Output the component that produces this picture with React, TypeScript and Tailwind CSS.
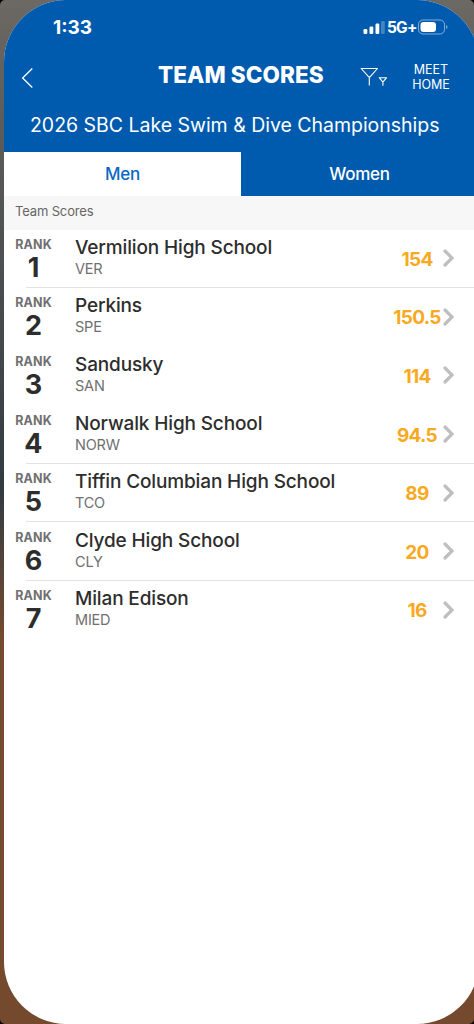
import { useState } from 'react'
import clsx from 'clsx'

type Team = {
  name: string
  code: string
  score: string
  divider?: boolean
}

const teams: Team[] = [
  { name: 'Vermilion High School', code: 'VER', score: '154', divider: true },
  { name: 'Perkins', code: 'SPE', score: '150.5' },
  { name: 'Sandusky', code: 'SAN', score: '114' },
  { name: 'Norwalk High School', code: 'NORW', score: '94.5', divider: true },
  {
    name: 'Tiffin Columbian High School',
    code: 'TCO',
    score: '89',
    divider: true
  },
  { name: 'Clyde High School', code: 'CLY', score: '20', divider: true },
  { name: 'Milan Edison', code: 'MIED', score: '16' }
]

const StatusBar = () => (
  <div className="flex h-[54px] items-center justify-between pl-[49px] pr-[30px]">
    <span className="pt-px text-[19px] font-bold leading-none">1:33</span>
    <div className="flex items-center">
      <svg width="23" height="14" viewBox="0 0 23 14" fill="currentColor">
        <rect x="0.5" y="9" width="3.8" height="5" rx="1.2" />
        <rect x="6.5" y="6.5" width="3.8" height="7.5" rx="1.2" />
        <rect x="12.5" y="3.5" width="3.8" height="10.5" rx="1.2" />
        <rect x="18" y="1" width="3.8" height="13" rx="1.2" opacity="0.25" />
      </svg>
      <span className="ml-px w-[30px] whitespace-nowrap pt-px text-[15.5px] font-bold leading-none tracking-[-0.8px]">
        5G+
      </span>
      <svg width="32" height="16" viewBox="0 0 32 16" fill="none">
        <rect
          x="1.5"
          y="1"
          width="26"
          height="14"
          rx="4.5"
          stroke="currentColor"
          opacity="0.5"
        />
        <rect x="3.5" y="3" width="15.5" height="10" rx="3" fill="currentColor" />
        <path d="M29.3 5.8v4.4c1.5-.7 1.5-3.7 0-4.4z" fill="currentColor" opacity="0.6" />
      </svg>
    </div>
  </div>
)

const Header = () => (
  <header className="h-[152px] bg-[#005bae] text-white">
    <StatusBar />
    <div className="grid h-[46px] grid-cols-[154px_166px_1fr] items-center">
      <svg
        className="ml-[17px] mt-[2px]"
        width="14"
        height="22"
        viewBox="0 0 14 22"
        fill="none"
        stroke="currentColor"
        strokeWidth="1.3"
      >
        <path d="M11.3 1.5 1.6 11l9.7 9.5" />
      </svg>
      <h1 className="-mt-[3px] whitespace-nowrap text-[22.5px] font-extrabold leading-none tracking-[0.08px]">
        TEAM SCORES
      </h1>
      <div className="flex items-center">
        <svg
          className="ml-[36px]"
          width="28"
          height="22"
          viewBox="0 0 28 22"
          fill="none"
          stroke="currentColor"
          strokeWidth="1.1"
          strokeLinejoin="round"
        >
          <path d="M1.2 2.5h16.3L10 10.8H8.7zM9.3 10.8v8.7M19.2 11.7h7.4l-3.3 3.9h-.8zM22.9 15.6v4.2" />
        </svg>
        <button className="ml-[18px] w-[50px] text-center text-[12.5px] leading-[15.5px]">
          MEET
          <br />
          HOME
        </button>
      </div>
    </div>
    <h2 className="mt-[15px] whitespace-nowrap pl-[26px] text-[19.5px] leading-[20px] tracking-[-0.02px]">
      2026 SBC Lake Swim &amp; Dive Championships
    </h2>
  </header>
)

const tabs = ['Men', 'Women']

const TeamRow = ({ team, rank }: { team: Team; rank: number }) => (
  <li className="flex h-[58.6px] flex-col">
    <div className="flex flex-1 pl-[10px]">
      <div className="w-[39px] pt-[8.4px] text-center">
        <div className="text-[12.5px] font-bold leading-[14px] tracking-[0.15px] text-[#707070]">
          RANK
        </div>
        <div className="mt-[2px] text-[27px] font-bold leading-[27px] text-[#2d2d2d]">
          {rank}
        </div>
      </div>
      <div className="ml-[22px] flex-1 whitespace-nowrap pt-[7.4px]">
        <div className="text-[19px] font-medium leading-[22px] tracking-[-0.14px] text-[#2d2d2d]">
          {team.name}
        </div>
        <div className="mt-px text-[14.5px] leading-[18px] tracking-[-0.2px] text-[#707070]">
          {team.code}
        </div>
      </div>
      <div className="flex w-[48px] justify-center self-center whitespace-nowrap pt-[2px] text-[19px] font-bold leading-none tracking-[-0.7px] text-[#f9a91f]">
        {team.score}
      </div>
      <svg
        className="mr-[18px] self-center"
        width="15"
        height="20"
        viewBox="0 0 15 20"
        fill="none"
        stroke="#bfbfbf"
        strokeWidth="3.2"
      >
        <path d="M4 3 11 10 4 17" strokeLinecap="round" />
      </svg>
    </div>
    <div className={clsx('ml-[22px] h-px', team.divider && 'bg-[#e2e2e2]')} />
  </li>
)

export default function App() {
  const [activeTab, setActiveTab] = useState('Men')

  return (
    <div className="h-[1024px] w-[474px] bg-black">
      <div className="h-[1024px] w-[474px] overflow-hidden rounded-[5px] bg-linear-to-b from-[#6c6863] from-0% via-[#333b41] via-48% to-[#74492e] to-62% pl-[4px] font-['Inter',sans-serif]">
        <div className="h-[1024px] w-[475px] overflow-hidden rounded-[62px] bg-white">
          <Header />

          {/* tabs */}
          <div className="flex h-[44px]">
            {tabs.map((tab) => (
              <button
                key={tab}
                onClick={() => setActiveTab(tab)}
                className={clsx(
                  'w-[237px] pt-[2px] text-[17px] font-medium tracking-[-0.3px]',
                  tab === activeTab
                    ? 'bg-white text-[#0a68c4]'
                    : 'bg-[#005bae] text-white'
                )}
              >
                {tab}
              </button>
            ))}
          </div>

          <div className="h-[33.5px] bg-[#f7f7f7] pl-[11px] text-[13px] leading-[31px] tracking-[-0.15px] text-[#666]">
            Team Scores
          </div>

          <ul className="w-[470px]">
            {teams.map((team, i) => (
              <TeamRow key={team.code} team={team} rank={i + 1} />
            ))}
          </ul>
        </div>
      </div>
    </div>
  )
}
